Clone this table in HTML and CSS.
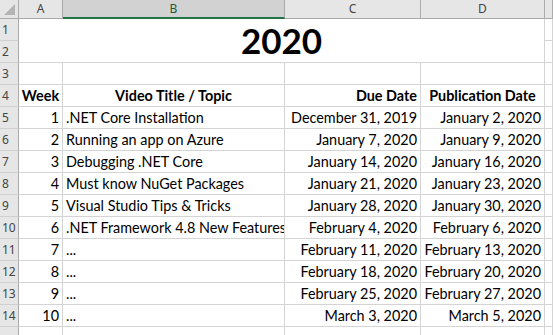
FILE: index.html
```html
<!DOCTYPE html>
<html lang="en">

<head>
    <meta charset="UTF-8">
    <title>2020 Schedule</title>
    <link rel="stylesheet" href="styles.css">
</head>

<body>
    <div class="sheet">
        <!-- column headers -->
        <div class="corner"><span class="tri"></span></div>
        <div class="ch">A</div>
        <div class="ch sel">B</div>
        <div class="ch">C</div>
        <div class="ch">D</div>
        <div class="ch"></div>

        <!-- rows 1-2: title -->
        <div class="rh">1</div>
        <div class="cell title">2020</div>
        <div class="cell"></div>
        <div class="rh">2</div>
        <div class="cell"></div>

        <!-- row 3 -->
        <div class="rh">3</div>
        <div class="cell"></div>
        <div class="cell"></div>
        <div class="cell"></div>
        <div class="cell"></div>
        <div class="cell"></div>

        <!-- row 4: table head -->
        <div class="rh">4</div>
        <div class="cell head mid">Week</div>
        <div class="cell head mid">Video Title / Topic</div>
        <div class="cell head right">Due Date</div>
        <div class="cell head mid">Publication Date</div>
        <div class="cell"></div>

        <div class="rh">5</div>
        <div class="cell right">1</div>
        <div class="cell">.NET Core Installation</div>
        <div class="cell right">December 31, 2019</div>
        <div class="cell right">January 2, 2020</div>
        <div class="cell"></div>

        <div class="rh">6</div>
        <div class="cell right">2</div>
        <div class="cell">Running an app on Azure</div>
        <div class="cell right">January 7, 2020</div>
        <div class="cell right">January 9, 2020</div>
        <div class="cell"></div>

        <div class="rh">7</div>
        <div class="cell right">3</div>
        <div class="cell">Debugging .NET Core</div>
        <div class="cell right">January 14, 2020</div>
        <div class="cell right">January 16, 2020</div>
        <div class="cell"></div>

        <div class="rh">8</div>
        <div class="cell right">4</div>
        <div class="cell">Must know NuGet Packages</div>
        <div class="cell right">January 21, 2020</div>
        <div class="cell right">January 23, 2020</div>
        <div class="cell"></div>

        <div class="rh">9</div>
        <div class="cell right">5</div>
        <div class="cell">Visual Studio Tips &amp; Tricks</div>
        <div class="cell right">January 28, 2020</div>
        <div class="cell right">January 30, 2020</div>
        <div class="cell"></div>

        <div class="rh">10</div>
        <div class="cell right">6</div>
        <div class="cell">.NET Framework 4.8 New Features</div>
        <div class="cell right">February 4, 2020</div>
        <div class="cell right">February 6, 2020</div>
        <div class="cell"></div>

        <div class="rh">11</div>
        <div class="cell right">7</div>
        <div class="cell">...</div>
        <div class="cell right">February 11, 2020</div>
        <div class="cell right">February 13, 2020</div>
        <div class="cell"></div>

        <div class="rh">12</div>
        <div class="cell right">8</div>
        <div class="cell">...</div>
        <div class="cell right">February 18, 2020</div>
        <div class="cell right">February 20, 2020</div>
        <div class="cell"></div>

        <div class="rh">13</div>
        <div class="cell right">9</div>
        <div class="cell">...</div>
        <div class="cell right">February 25, 2020</div>
        <div class="cell right">February 27, 2020</div>
        <div class="cell"></div>

        <div class="rh">14</div>
        <div class="cell right">10</div>
        <div class="cell">...</div>
        <div class="cell right">March 3, 2020</div>
        <div class="cell right">March 5, 2020</div>
        <div class="cell"></div>

        <!-- next row, only its top edge shows -->
        <div class="rh"></div>
        <div class="cell"></div>
        <div class="cell"></div>
        <div class="cell"></div>
        <div class="cell"></div>
        <div class="cell"></div>
    </div>
</body>

</html>
```

FILE: styles.css
```css
* {
    margin: 0;
    padding: 0;
    box-sizing: border-box;
}

body {
    background-color: #fff;
    overflow: hidden;
}

/* the worksheet grid: row header + columns A-E */
.sheet {
    display: grid;
    width: 100%;
    grid-template-columns: 19px 44px 222px 136px 124px minmax(0, 1fr);
    grid-template-rows: 19px;
    grid-auto-rows: 22px;
    font-family: Lato, "Liberation Sans", sans-serif;
    font-size: 14.4px;
    color: #000;
}

/* top-left corner with the select-all triangle */
.corner {
    background-color: #e6e6e6;
    border-right: 1px solid #ababab;
    border-bottom: 1px solid #ababab;
    position: relative;
}

.tri {
    position: absolute;
    right: 3px;
    bottom: 3px;
    width: 0;
    height: 0;
    border-left: 11px solid transparent;
    border-bottom: 11px solid #b4b4b4;
}

/* column headers */
.ch {
    background-color: #e6e6e6;
    border-right: 1px solid #ababab;
    border-bottom: 1px solid #ababab;
    font-family: "Noto Sans", sans-serif;
    font-size: 12px;
    color: #444;
    text-align: center;
    line-height: 18px;
}

.ch.sel {
    background-color: #d2d2d2;
    color: #1d5b38;
    border-bottom: 2px solid #217346;
}

/* row headers */
.rh {
    background-color: #e6e6e6;
    border-right: 1px solid #ababab;
    border-bottom: 1px solid #d0d0d0;
    font-family: "Noto Sans", sans-serif;
    font-size: 12px;
    color: #444;
    padding-left: 2px;
    line-height: 22px;
}

/* ordinary cells, text sits at the bottom like in Excel */
.cell {
    border-right: 1px solid #d4d4d4;
    border-bottom: 1px solid #d4d4d4;
    padding: 0 3px 2px 3px;
    white-space: nowrap;
    overflow: hidden;
    display: flex;
    align-items: flex-end;
}

.right {
    justify-content: flex-end;
}

.mid {
    justify-content: center;
}

.head {
    font-weight: bold;
}

/* merged A1:D2 */
.title {
    grid-column: 2 / 6;
    grid-row: 2 / 4;
    justify-content: center;
    font-size: 35px;
    font-weight: bold;
    padding-bottom: 1px;
    line-height: 42px;
    overflow: visible;
}
```
